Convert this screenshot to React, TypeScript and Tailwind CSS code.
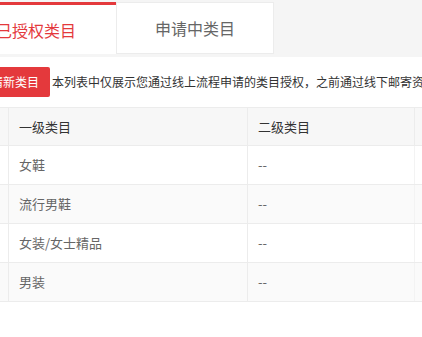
const rows = [
  { first: '女鞋', second: '--' },
  { first: '流行男鞋', second: '--' },
  { first: '女装/女士精品', second: '--' },
  { first: '男装', second: '--' },
];

const font = { fontFamily: '"Noto Sans CJK SC", "Noto Sans", sans-serif' };

export default function App() {
  return (
    <div className="w-[422px] h-[337px] overflow-hidden bg-white" style={font}>
      <div className="-ml-[44px] w-[720px]">
        {/* tabs */}
        <div className="h-[57px] bg-[#f5f5f5] pt-[2px] flex">
          <div className="w-[160px] h-[52px] bg-white border-t-[3px] border-[#e4393c] flex items-center justify-center text-[16px] text-[#e4393c]">
            已授权类目
          </div>
          <div className="w-[158px] h-[52px] bg-white border border-[#ececec] flex items-center justify-center text-[16px] text-[#666]">
            申请中类目
          </div>
        </div>

        {/* notice */}
        <div className="pl-[12px] mt-[10px] flex items-center gap-[2px]">
          <button className="h-[30px] px-[11px] bg-[#e4393c] text-white text-[12px] rounded-[2px] whitespace-nowrap">
            申请新类目
          </button>
          <span className="text-[12px] text-[#333] whitespace-nowrap">
            本列表中仅展示您通过线上流程申请的类目授权，之前通过线下邮寄资质申请的类目授权请联系运营查看
          </span>
        </div>

        {/* table */}
        <div className="ml-[12px] mt-[10px] border-t border-[#ececec] text-[13px]">
          <div className="flex h-[38px] bg-[#f7f7f7] border-b border-[#ececec] text-[#333]">
            <div className="w-[41px] border-r border-[#ececec]" />
            <div className="w-[239px] pl-[10px] flex items-center border-r border-[#ececec]">一级类目</div>
            <div className="w-[167px] pl-[10px] flex items-center border-r border-[#ececec]">二级类目</div>
            <div className="flex-1" />
          </div>
          {rows.map((r, i) => (
            <div
              key={r.first}
              className={
                'flex h-[39px] border-b border-[#ececec] text-[#666] ' +
                (i % 2 === 1 ? 'bg-[#fafafa]' : 'bg-white')
              }
            >
              <div className="w-[41px] border-r border-[#ececec]" />
              <div className="w-[239px] pl-[10px] flex items-center border-r border-[#ececec]">{r.first}</div>
              <div className="w-[167px] pl-[10px] flex items-center border-r border-[#f3f3f3]">{r.second}</div>
              <div className="flex-1" />
            </div>
          ))}
        </div>
      </div>
    </div>
  );
}
